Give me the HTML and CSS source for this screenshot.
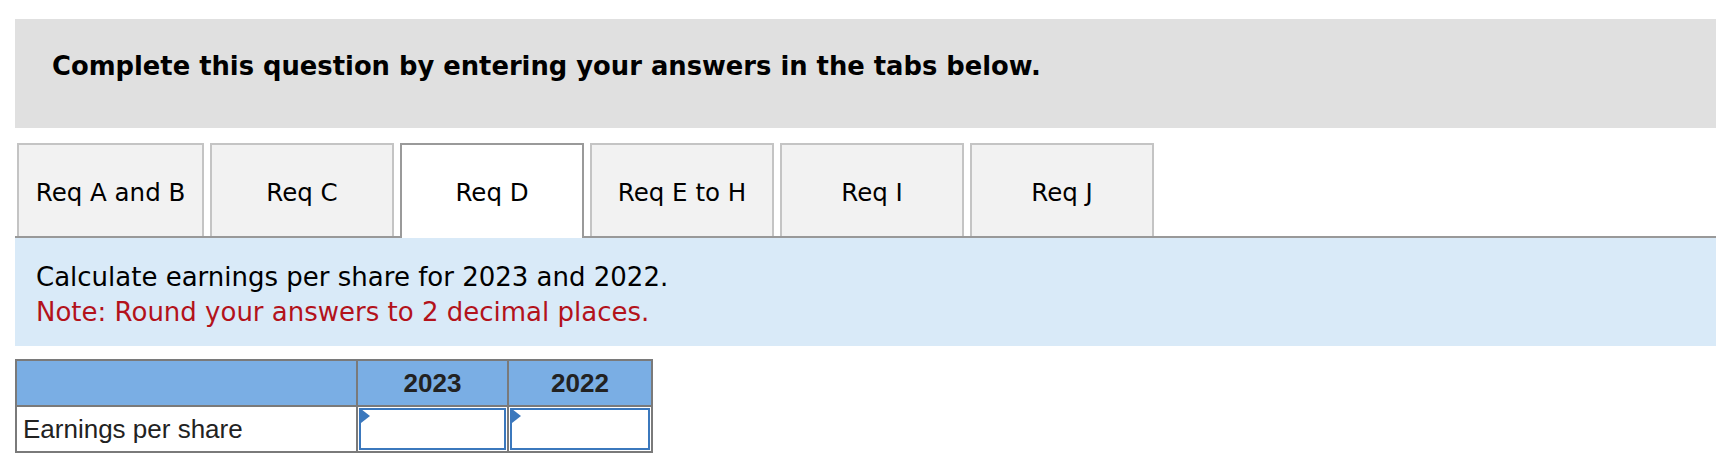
FILE: index.html
```html
<!DOCTYPE html>
<html>
<head>
<meta charset="utf-8">
<link rel="stylesheet" href="styles.css">
</head>
<body>
<div class="page">
  <div class="banner">Complete this question by entering your answers in the tabs below.</div>
  <div class="tabs">
    <div class="tab">Req A and B</div>
    <div class="tab">Req C</div>
    <div class="tab active">Req D</div>
    <div class="tab">Req E to H</div>
    <div class="tab">Req I</div>
    <div class="tab">Req J</div>
  </div>
  <div class="panel">
    <p class="line">Calculate earnings per share for 2023 and 2022.</p>
    <p class="line note">Note: Round your answers to 2 decimal places.</p>
  </div>
  <table class="grid">
    <colgroup>
      <col class="c-label">
      <col class="c-y1">
      <col class="c-y2">
    </colgroup>
    <thead>
      <tr>
        <th></th>
        <th>2023</th>
        <th>2022</th>
      </tr>
    </thead>
    <tbody>
      <tr>
        <td class="label">Earnings per share</td>
        <td class="entry"><div class="box"><span class="flag"></span></div></td>
        <td class="entry"><div class="box"><span class="flag"></span></div></td>
      </tr>
    </tbody>
  </table>
</div>
</body>
</html>
```

FILE: styles.css
```css
html, body {
  margin: 0;
  padding: 0;
  background: #ffffff;
}

.page {
  padding: 19px 6px 0 15px;
  font-family: "DejaVu Sans", Verdana, sans-serif;
  color: #000;
}

.banner {
  height: 109px;
  box-sizing: border-box;
  background: #e0e0e0;
  display: flex;
  align-items: center;
  padding-left: 37px;
  padding-bottom: 15px;
  font-weight: bold;
  font-size: 25.8px;
}

.tabs {
  margin-top: 15px;
  display: flex;
  gap: 6px;
  padding-left: 2px;
  border-bottom: 2px solid #999999;
  height: 93px;
}

.tab {
  width: 184px;
  height: 93px;
  box-sizing: border-box;
  border: 2px solid #c4c4c4;
  border-bottom: none;
  background: #f2f2f2;
  display: flex;
  align-items: center;
  justify-content: center;
  font-size: 24.5px;
  padding-top: 4px;
}

.tab:first-child {
  width: 187px;
}

.tab.active {
  background: #ffffff;
  border-color: #9a9a9a;
  height: 95px;
  padding-bottom: 2px;
}

.panel {
  background: #d9eaf8;
  height: 108px;
  box-sizing: border-box;
  padding: 22px 0 0 21px;
}

.line {
  margin: 0;
  font-size: 26px;
  line-height: 35px;
}

.note {
  color: #b3121b;
}

.grid {
  margin-top: 13px;
  border-collapse: collapse;
  table-layout: fixed;
  width: 636px;
  font-family: "Liberation Sans", Arial, sans-serif;
  border: 2px solid #7a7a7a;
}

.c-label {
  width: 341px;
}

.c-y1 {
  width: 151px;
}

.c-y2 {
  width: 144px;
}

.grid th,
.grid td {
  border: 2px solid #7a7a7a;
  padding: 0;
}

.grid thead th {
  background: #7aaee4;
  height: 44px;
  font-size: 26px;
  font-weight: bold;
  color: #222222;
}

.label {
  height: 44px;
  font-size: 26px;
  color: #222222;
  padding-left: 6px !important;
  background: #ffffff;
}

.entry {
  padding: 1px !important;
  background: #ffffff;
}

.box {
  position: relative;
  height: 42px;
  border: 2px solid #3b78bd;
  box-sizing: border-box;
}

.flag {
  position: absolute;
  left: 0;
  top: -1px;
  width: 0;
  height: 0;
  border-top: 7px solid transparent;
  border-bottom: 7px solid transparent;
  border-left: 9px solid #3b78bd;
}
```
